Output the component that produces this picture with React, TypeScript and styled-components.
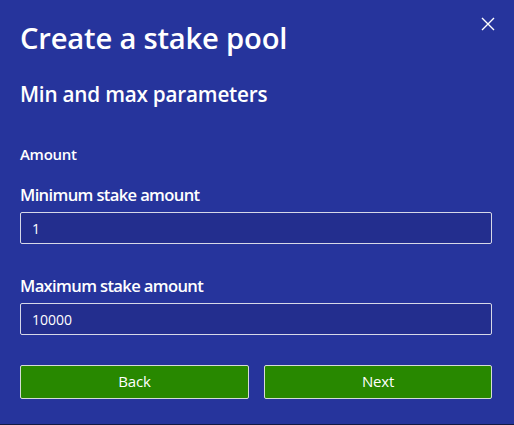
import React from "react";
import styled, { createGlobalStyle } from "styled-components";

const Global = createGlobalStyle`
  html, body { margin: 0; padding: 0; background: #111a44; }
  body { font-family: "Open Sans", "Noto Sans", sans-serif; }
  * { box-sizing: border-box; }
`;

const Dialog = styled.div`
  position: relative;
  width: 514px;
  height: 424px;
  background: #26349c;
  color: #ffffff;
  padding: 18px 22px 0 20px;
  display: flex;
  flex-direction: column;
`;

const Close = styled.button`
  position: absolute;
  top: 16px;
  right: 18px;
  width: 16px;
  height: 16px;
  padding: 0;
  border: none;
  background: transparent;
  cursor: pointer;
  display: flex;
`;

const Title = styled.h1`
  margin: 0;
  font-size: 29.2px;
  font-weight: 600;
  line-height: 40px;
  letter-spacing: -0.2px;
`;

const Subtitle = styled.h2`
  margin: 21px 0 0;
  font-size: 20.7px;
  font-weight: 600;
  line-height: 30px;
  letter-spacing: -0.2px;
`;

const Section = styled.div`
  margin-top: 35px;
  font-size: 15px;
  font-weight: 600;
  line-height: 20px;
  letter-spacing: -0.3px;
`;

const Field = styled.div<{ $top: number }>`
  margin-top: ${(p) => p.$top}px;
  display: flex;
  flex-direction: column;
`;

const Label = styled.label`
  font-size: 16.6px;
  font-weight: 600;
  line-height: 22px;
  letter-spacing: -0.65px;
  margin-bottom: 6px;
`;

const Input = styled.input`
  width: 472px;
  height: 32px;
  background: #232e8e;
  border: 1px solid #d6d8e8;
  border-radius: 2px;
  color: #ffffff;
  font-family: "Open Sans", "Noto Sans", sans-serif;
  font-size: 14px;
  padding: 0 11px;
  outline: none;
`;

const Actions = styled.div`
  margin-top: 30px;
  display: grid;
  grid-template-columns: 229px 228px;
  column-gap: 15px;
`;

const Button = styled.button`
  height: 34px;
  padding: 0 0 2px;
  background: #288800;
  border: 1px solid #d6dcd6;
  border-radius: 2px;
  color: #ffffff;
  font-family: "Open Sans", "Noto Sans", sans-serif;
  font-size: 15px;
  letter-spacing: -0.2px;
  cursor: pointer;
`;

export default function App() {
  return (
    <>
      <Global />
      <Dialog>
        <Close aria-label="Close">
          <svg width="16" height="16" viewBox="0 0 16 16">
            <path d="M2 2 L14 14 M14 2 L2 14" stroke="#ffffff" strokeWidth="1.4" />
          </svg>
        </Close>
        <Title>Create a stake pool</Title>
        <Subtitle>Min and max parameters</Subtitle>
        <Section>Amount</Section>
        <Field $top={20}>
          <Label>Minimum stake amount</Label>
          <Input defaultValue="1" />
        </Field>
        <Field $top={31}>
          <Label>Maximum stake amount</Label>
          <Input defaultValue="10000" />
        </Field>
        <Actions>
          <Button>Back</Button>
          <Button>Next</Button>
        </Actions>
      </Dialog>
    </>
  );
}
